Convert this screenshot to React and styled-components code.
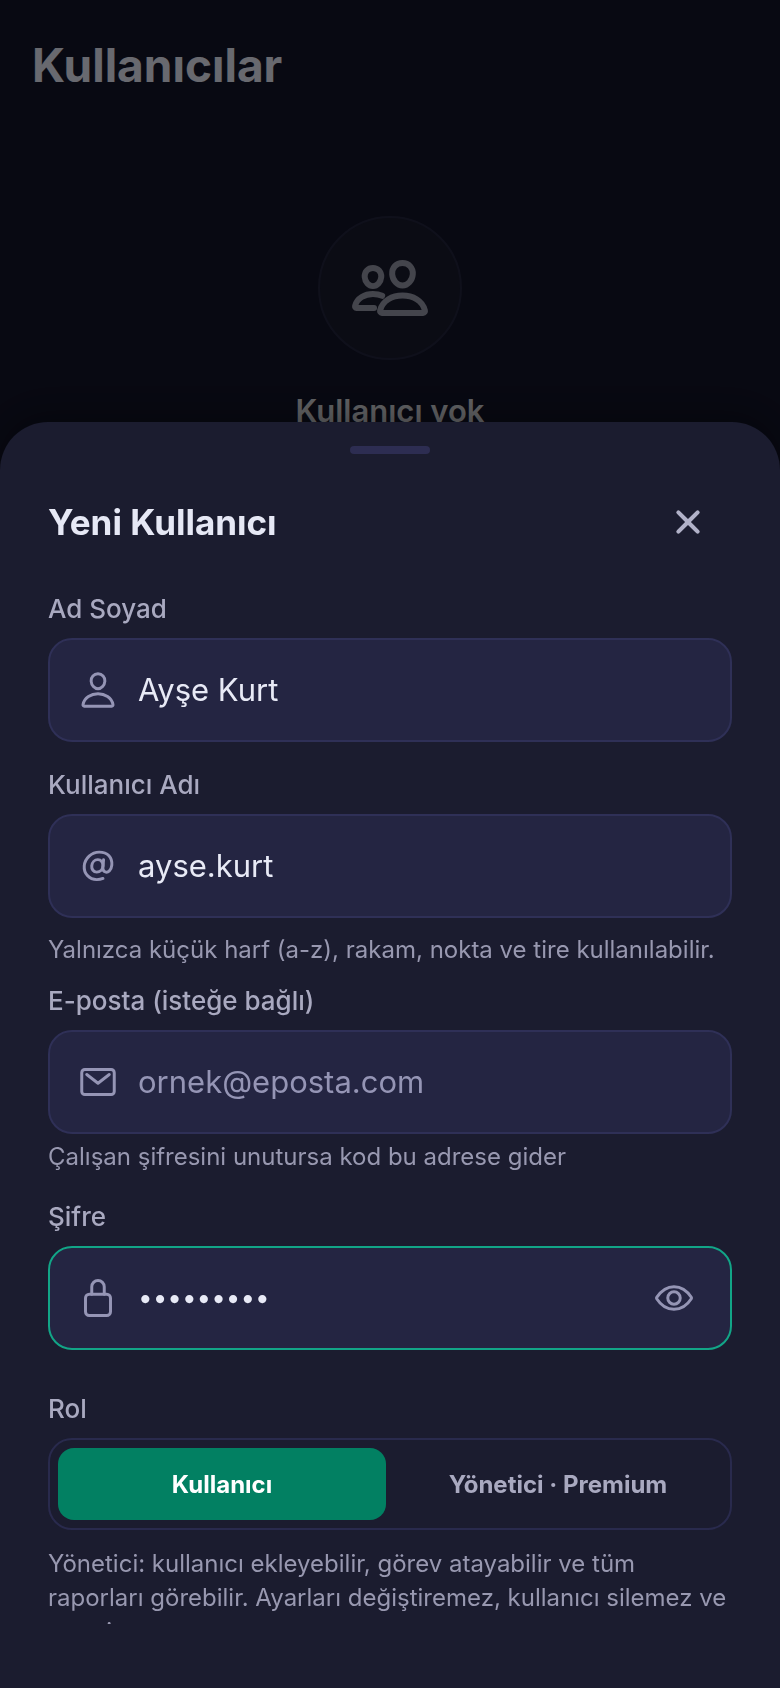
import React, { useState } from "react";
import styled, { createGlobalStyle } from "styled-components";
import {
  IoAt,
  IoClose,
  IoEyeOffOutline,
  IoEyeOutline,
  IoLockClosedOutline,
  IoMailOutline,
  IoPeopleOutline,
  IoPersonOutline,
} from "react-icons/io5";

const GlobalStyle = createGlobalStyle`
  * {
    box-sizing: border-box;
  }
  body {
    margin: 0;
    background-color: #121428;
    color: #e6e8f5;
    font-family: Inter, "Liberation Sans", sans-serif;
  }
  h1, h2, p {
    margin: 0;
  }
  button, input {
    font-family: inherit;
  }
  svg [stroke-width="32"], svg [stroke-width="32px"] {
    stroke-width: 38px;
  }
`;

const Page = styled.main`
  min-height: 100vh;
  padding: 32px;
`;

const PageTitle = styled.h1`
  font-size: 46px;
  line-height: 66px;
  font-weight: 700;
`;

const Empty = styled.section`
  display: flex;
  flex-direction: column;
  align-items: center;
  gap: 31px;
  padding-top: 118px;
`;

const EmptyIcon = styled.div`
  display: flex;
  align-items: center;
  justify-content: center;
  width: 144px;
  height: 144px;
  border: 2px solid #23253d;
  border-radius: 50%;
  background-color: #191b2e;
  color: #9799a8;
  font-size: 80px;
`;

const EmptyTitle = styled.h2`
  font-size: 31px;
  line-height: 40px;
  font-weight: 600;
  color: #d6d7dc;
`;

const Overlay = styled.div`
  position: fixed;
  inset: 0;
  display: flex;
  align-items: flex-end;
  background-color: rgba(0, 0, 0, 0.55);
`;

const Sheet = styled.section`
  display: flex;
  flex-direction: column;
  width: 100%;
  height: 75vh;
  padding: 24px 48px 64px;
  border-radius: 48px 48px 0 0;
  background-color: #1b1c2f;
  box-shadow: 0 -8px 32px rgba(0, 0, 0, 0.3);
`;

const Handle = styled.div`
  flex-shrink: 0;
  align-self: center;
  width: 80px;
  height: 8px;
  border-radius: 4px;
  background-color: #2d2d52;
`;

const SheetHeader = styled.header`
  display: flex;
  flex-shrink: 0;
  align-items: center;
  justify-content: space-between;
  margin: 24px 0;
`;

const SheetTitle = styled.h2`
  font-size: 35px;
  line-height: 44px;
  font-weight: 700;
`;

const IconButton = styled.button`
  display: flex;
  flex-shrink: 0;
  align-items: center;
  justify-content: center;
  width: ${(props) => props.$size}px;
  height: ${(props) => props.$size}px;
  padding: 0;
  border: none;
  background: none;
  color: ${(props) => props.$color};
  font-size: ${(props) => props.$icon}px;
  cursor: pointer;
`;

const Form = styled.form`
  flex: 1;
  min-height: 0;
  overflow: hidden;
`;

const Field = styled.div`
  margin-bottom: ${(props) => props.$space}px;
`;

const Label = styled.label`
  display: block;
  margin-bottom: 10px;
  font-size: 26px;
  line-height: 38px;
  font-weight: 500;
  color: #a9a9c0;
`;

const InputBox = styled.div`
  display: flex;
  align-items: center;
  gap: 20px;
  height: 104px;
  padding: 0 28px;
  border: 2px solid ${(props) => (props.$active ? "#12a587" : "#2f3057")};
  border-radius: 24px;
  background-color: #242542;
  color: #9595b5;

  > svg {
    flex-shrink: 0;
    font-size: 40px;
  }
`;

const Input = styled.input`
  flex: 1;
  min-width: 0;
  padding: 0;
  border: none;
  outline: none;
  background: none;
  color: #e8eaf6;
  font-size: 31px;
  line-height: 40px;

  &::placeholder {
    color: #9595b5;
    opacity: 1;
  }

  &[type="password"] {
    font-size: 26px;
  }
`;

const Hint = styled.p`
  margin-top: ${(props) => props.$space}px;
  font-size: 24px;
  line-height: 34px;
  color: #9898b0;
`;

const Segment = styled.div`
  display: flex;
  gap: 8px;
  padding: 8px;
  border: 2px solid #292a4d;
  border-radius: 24px;
`;

const SegmentButton = styled.button`
  flex: 1;
  height: 72px;
  padding: 0;
  border: none;
  border-radius: 16px;
  background-color: ${(props) => (props.$selected ? "#028062" : "transparent")};
  color: ${(props) => (props.$selected ? "#ffffff" : "#a9a9c0")};
  font-size: 24px;
  font-weight: 700;
  cursor: pointer;
`;

export default function App() {
  const [name, setName] = useState("Ayşe Kurt");
  const [username, setUsername] = useState("ayse.kurt");
  const [email, setEmail] = useState("");
  const [password, setPassword] = useState("ayse12345");
  const [showPassword, setShowPassword] = useState(false);
  const [role, setRole] = useState("user");

  return (
    <>
      <GlobalStyle />
      <Page>
        <PageTitle>Kullanıcılar</PageTitle>
        <Empty>
          <EmptyIcon>
            <IoPeopleOutline />
          </EmptyIcon>
          <EmptyTitle>Kullanıcı yok</EmptyTitle>
        </Empty>
      </Page>
      <Overlay>
        <Sheet role="dialog" aria-labelledby="sheet-title">
          <Handle />
          <SheetHeader>
            <SheetTitle id="sheet-title">Yeni Kullanıcı</SheetTitle>
            <IconButton
              type="button"
              aria-label="Kapat"
              $size={88}
              $icon={44}
              $color="#b1b1c8"
            >
              <IoClose />
            </IconButton>
          </SheetHeader>
          <Form onSubmit={(e) => e.preventDefault()}>
            <Field $space={24}>
              <Label htmlFor="name">Ad Soyad</Label>
              <InputBox>
                <IoPersonOutline />
                <Input
                  id="name"
                  value={name}
                  onChange={(e) => setName(e.target.value)}
                />
              </InputBox>
            </Field>
            <Field $space={15}>
              <Label htmlFor="username">Kullanıcı Adı</Label>
              <InputBox>
                <IoAt />
                <Input
                  id="username"
                  value={username}
                  onChange={(e) => setUsername(e.target.value)}
                />
              </InputBox>
              <Hint $space={15}>
                Yalnızca küçük harf (a-z), rakam, nokta ve tire kullanılabilir.
              </Hint>
            </Field>
            <Field $space={24}>
              <Label htmlFor="email">E-posta (isteğe bağlı)</Label>
              <InputBox>
                <IoMailOutline />
                <Input
                  id="email"
                  type="email"
                  placeholder="ornek@eposta.com"
                  value={email}
                  onChange={(e) => setEmail(e.target.value)}
                />
              </InputBox>
              <Hint $space={6}>Çalışan şifresini unutursa kod bu adrese gider</Hint>
            </Field>
            <Field $space={40}>
              <Label htmlFor="password">Şifre</Label>
              <InputBox $active>
                <IoLockClosedOutline />
                <Input
                  id="password"
                  type={showPassword ? "text" : "password"}
                  value={password}
                  onChange={(e) => setPassword(e.target.value)}
                />
                <IconButton
                  type="button"
                  aria-label="Şifreyi göster"
                  $size={56}
                  $icon={40}
                  $color="#9595b5"
                  onClick={() => setShowPassword(!showPassword)}
                >
                  {showPassword ? <IoEyeOffOutline /> : <IoEyeOutline />}
                </IconButton>
              </InputBox>
            </Field>
            <Label as="p" id="role-label">
              Rol
            </Label>
            <Segment role="group" aria-labelledby="role-label">
              <SegmentButton
                type="button"
                $selected={role === "user"}
                onClick={() => setRole("user")}
              >
                Kullanıcı
              </SegmentButton>
              <SegmentButton
                type="button"
                $selected={role === "admin"}
                onClick={() => setRole("admin")}
              >
                Yönetici · Premium
              </SegmentButton>
            </Segment>
            <Hint $space={17}>
              Yönetici: kullanıcı ekleyebilir, görev atayabilir ve tüm raporları
              görebilir. Ayarları değiştiremez, kullanıcı silemez ve premium
              açamaz.
            </Hint>
          </Form>
        </Sheet>
      </Overlay>
    </>
  );
}
